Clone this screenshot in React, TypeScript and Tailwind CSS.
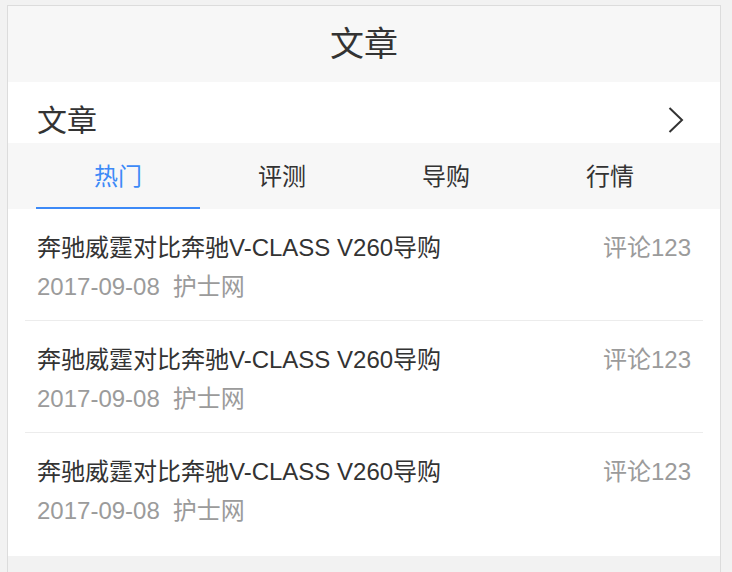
const tabs = ["热门", "评测", "导购", "行情"];

const articles = [
  { id: 1, title: "奔驰威霆对比奔驰V-CLASS V260导购", date: "2017-09-08", source: "护士网", comments: 123 },
  { id: 2, title: "奔驰威霆对比奔驰V-CLASS V260导购", date: "2017-09-08", source: "护士网", comments: 123 },
  { id: 3, title: "奔驰威霆对比奔驰V-CLASS V260导购", date: "2017-09-08", source: "护士网", comments: 123 },
];

export default function App() {
  return (
    <div
      className="h-[572px] w-[732px] overflow-hidden bg-[#f2f2f2] pl-[7px] pr-[11px] pt-[5px] text-[#333]"
      style={{ fontFamily: '"Liberation Sans", "Noto Sans CJK SC", sans-serif' }}
    >
      <div className="flex h-full flex-col border border-b-0 border-[#dcdcdc] bg-[#f7f7f7]">
        <header className="flex h-[76px] items-center justify-center text-[34px] leading-none text-[#333]">
          文章
        </header>

        <div className="flex h-[61px] items-center justify-between bg-white pl-[29px] pr-[36px] pt-[17px]">
          <h2 className="text-[30px] leading-none">文章</h2>
          <svg width="16" height="26" viewBox="0 0 16 26" fill="none" className="mt-[-2px]">
            <polyline points="1.5,1 14,13 1.5,25" stroke="#333" strokeWidth="2" />
          </svg>
        </div>

        <nav className="flex h-[66px] bg-[#f7f7f7] pl-[28px] pr-[28px]">
          {tabs.map((tab, i) => (
            <div
              key={tab}
              className={
                i === 0
                  ? "flex flex-1 items-center justify-center border-b-[2px] border-[#3d8af7] pt-[4px] text-[24px] text-[#3d8af7]"
                  : "flex flex-1 items-center justify-center border-b-[2px] border-transparent pt-[4px] text-[24px] text-[#333]"
              }
            >
              {tab}
            </div>
          ))}
        </nav>

        <ul className="bg-white px-[17px] pb-[12px]">
          {articles.map((item) => (
            <li
              key={item.id}
              className="flex h-[112px] flex-col border-b border-[#ececec] px-3 pt-[24px] last:h-[111px] last:border-b-0"
            >
              <div className="flex items-center justify-between text-[24px] leading-[30px]">
                <span className="text-[#333]">{item.title}</span>
                <span className="text-[#9b9b9b]">评论{item.comments}</span>
              </div>
              <div className="mt-[9px] flex gap-[13px] text-[24px] leading-[30px] text-[#9b9b9b]">
                <span>{item.date}</span>
                <span>{item.source}</span>
              </div>
            </li>
          ))}
        </ul>

        <div className="flex-1 bg-[#f2f2f2]" />
      </div>
    </div>
  );
}
